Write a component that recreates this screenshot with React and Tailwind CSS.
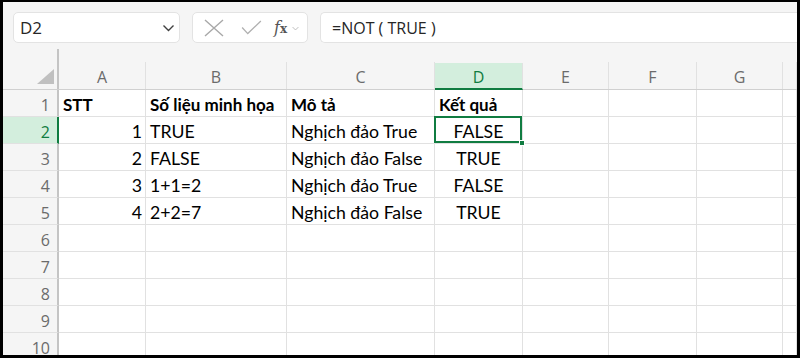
import React from "react";

const cols = [
  { key: "A", w: "w-[87px]" },
  { key: "B", w: "w-[141px]" },
  { key: "C", w: "w-[148px]" },
  { key: "D", w: "w-[88px]" },
  { key: "E", w: "w-[86px]" },
  { key: "F", w: "w-[88px]" },
  { key: "G", w: "w-[86px]" },
  { key: "H", w: "flex-1" },
];

const rows = [
  { n: 1, a: "STT", b: "Số liệu minh họa", c: "Mô tả", d: "Kết quả", bold: true },
  { n: 2, a: "1", b: "TRUE", c: "Nghịch đảo True", d: "FALSE" },
  { n: 3, a: "2", b: "FALSE", c: "Nghịch đảo False", d: "TRUE" },
  { n: 4, a: "3", b: "1+1=2", c: "Nghịch đảo True", d: "FALSE" },
  { n: 5, a: "4", b: "2+2=7", c: "Nghịch đảo False", d: "TRUE" },
  { n: 6 },
  { n: 7 },
  { n: 8 },
  { n: 9 },
  { n: 10 },
];

const Chevron = ({ className }) => (
  <svg viewBox="0 0 12 8" className={className} fill="none" stroke="currentColor" strokeWidth="1.4">
    <path d="M1 1.5 L6 6.5 L11 1.5" />
  </svg>
);

const Cell = ({ col, row }) => {
  let content = null;
  let align = "justify-start pl-[4px]";
  if (col.key === "A" && row.a) {
    content = row.a;
    align = row.bold ? "justify-start pl-[4px]" : "justify-end pr-[3px]";
  }
  if (col.key === "B" && row.b) content = row.b;
  if (col.key === "C" && row.c) content = row.c;
  if (col.key === "D" && row.d) {
    content = row.d;
    align = row.bold ? "justify-start pl-[4px]" : "justify-center";
  }
  const selected = col.key === "D" && row.n === 2;
  return (
    <div
      className={`${col.w} relative flex items-end pb-[1px] leading-[21px] border-r border-b border-[#e1e1e1] whitespace-nowrap ${align} ${
        row.bold ? "font-bold text-[17px]" : "text-[17.7px]"
      } ${selected ? "z-10" : ""}`}
    >
      {content}
      {selected && (
        <>
          <div className="absolute -left-[1px] -top-[1px] right-0 bottom-0 border-2 border-[#107c41]" />
          <div className="absolute -right-[3px] -bottom-[3px] w-[6px] h-[6px] bg-[#107c41] border border-white" />
        </>
      )}
    </div>
  );
};

export default function App() {
  return (
    <div className="w-[800px] h-[358px] overflow-hidden border-[3px] border-t-2 border-black bg-[#f5f5f5] flex flex-col" style={{ fontFamily: "Lato, sans-serif" }}>
      {/* formula bar */}
      <div className="h-[47px] flex items-start pt-[10px] pl-[10px] gap-[12px] shrink-0">
        <div className="w-[167px] h-[31px] bg-white rounded-[5px] border border-[#e3e3e3] flex items-center justify-between pl-[6px] pr-[4px] text-[17px] text-[#262626]" style={{ fontFamily: "'Open Sans', sans-serif" }}>
          <span>D2</span>
          <Chevron className="w-[13px] h-[8px] text-[#404040]" />
        </div>
        <div className="w-[116px] h-[31px] bg-white rounded-[5px] border border-[#e3e3e3] flex items-center pl-[11px]">
          <svg viewBox="0 0 20 18" className="w-[20px] h-[18px]" fill="none" stroke="#a8a8a8" strokeWidth="1.4">
            <path d="M1 1 L19 17 M19 1 L1 17" />
          </svg>
          <svg viewBox="0 0 22 16" className="w-[21px] h-[15px] ml-[17px]" fill="none" stroke="#b0b0b0" strokeWidth="1.4">
            <path d="M1 8 L7 14.5 L21 1" />
          </svg>
          <span className="ml-[12px] text-[16px] italic text-[#555]" style={{ fontFamily: "'DejaVu Serif', serif" }}>
            f<span className="text-[12px] not-italic font-bold">x</span>
          </span>
          <Chevron className="ml-[5px] mt-[2px] w-[7px] h-[5px] text-[#b0b0b0]" />
        </div>
        <div className="flex-1 h-[31px] bg-white rounded-l-[5px] border border-r-0 border-[#e3e3e3] flex items-center pl-[11px] text-[16px] text-[#262626]" style={{ fontFamily: "'Open Sans', sans-serif" }}>
          =NOT ( TRUE )
        </div>
      </div>

      {/* grid */}
      <div className="flex-1 flex flex-col text-black">
        {/* column headers */}
        <div className="h-[41px] flex shrink-0 border-b border-[#d0d0d0]">
          <div className="w-[56px] relative border-r-2 border-[#c4c4c4] shrink-0">
            <svg viewBox="0 0 17 15" className="absolute right-[3px] bottom-[5px] w-[17px] h-[15px]">
              <path d="M17 0 L17 15 L0 15 Z" fill="#c0c0c0" />
            </svg>
          </div>
          {cols.map((c) => (
            <div key={c.key} className={`${c.w} shrink-0 flex items-end`}>
              <div
                className={`w-full h-[27px] flex items-center justify-center pt-[2px] text-[16px] border-r ${
                  c.key === "D"
                    ? "bg-[#d3eedd] text-[#107c41] border-b-2 border-b-[#107c41] border-r-[#e1e1e1] -mb-[1px]"
                    : "text-[#6b6b6b] border-[#e1e1e1]"
                }`}
                style={{ fontFamily: "'Open Sans', sans-serif" }}
              >
                {c.key !== "H" ? c.key : ""}
              </div>
            </div>
          ))}
        </div>

        {/* rows */}
        {rows.map((r) => (
          <div key={r.n} className="h-[27px] flex shrink-0 bg-white">
            <div
              className={`w-[56px] shrink-0 flex items-center justify-end pt-[3px] pr-[7px] text-[16px] border-r-2 border-b ${
                r.n === 2
                  ? "bg-[#d3eedd] text-[#107c41] border-r-[#107c41] border-b-[#e1e1e1]"
                  : "bg-[#f5f5f5] text-[#6b6b6b] border-r-[#c4c4c4] border-b-[#e1e1e1]"
              }`}
              style={{ fontFamily: "'Open Sans', sans-serif" }}
            >
              {r.n}
            </div>
            {cols.map((c) => (
              <Cell key={c.key} col={c} row={r} />
            ))}
          </div>
        ))}
      </div>
    </div>
  );
}
